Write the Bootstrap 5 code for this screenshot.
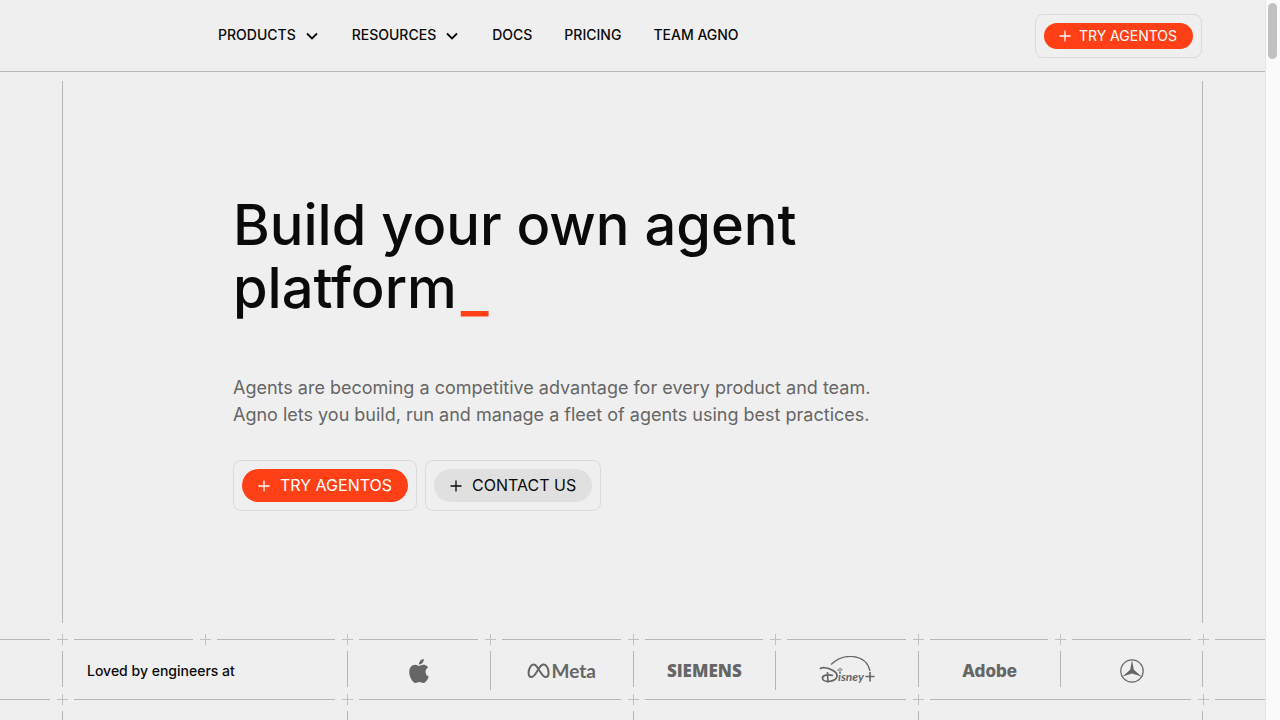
<!DOCTYPE html>
<html lang="en">
<head>
<meta charset="utf-8">
<meta name="viewport" content="width=device-width, initial-scale=1">
<title>Agno</title>
<link href="https://cdn.jsdelivr.net/npm/bootstrap@5.3.0/dist/css/bootstrap.min.css" rel="stylesheet">
<style>
:root { --rule: #b4b7b4; --ink: #0a0a0a; --brand: #ff4017; --logo: #666; }
body { background: #efefef; color: var(--ink); font-family: Inter, "Liberation Sans", sans-serif; font-size: 14px; line-height: 20px; }
.frame { width: calc(100% - 48px); max-width: 1141px; margin-inline: auto; }
.site-header { border-bottom: 1px solid var(--rule); }
.site-header .frame { min-height: 71px; }
.main-nav { gap: 32px; padding: 0 0 2px 156px; }
.main-nav a, .main-nav button { color: var(--ink); text-decoration: none; font-weight: 500; padding: 0; border: 0; background: none; }
.btn-shell { border: 1px solid #d9dbd9; border-radius: 8px; padding: 8px; }
.site-header .btn-shell { margin-right: 1px; }
.pill { border: 0; border-radius: 20px; display: flex; align-items: center; gap: 8px; padding: 3px 16px 3px 15px; font-size: 14px; line-height: 20px; }
.pill-lg { font-size: 16px; line-height: 25px; padding: 4px 16px; gap: 10px; }
.pill-brand { background: var(--brand); color: #fff; }
.pill-plain { background: #e0e0e0; color: var(--ink); }
.hero { border: solid var(--rule); border-width: 0 1px; margin-top: 9px; margin-bottom: 4px; min-height: 542px; padding: 113px 24px 32px 170px; }
.hero h1 { font-size: 56px; line-height: 63px; font-weight: 500; max-width: 640px; margin-bottom: 54px; }
.hero h1 span { display: inline-block; line-height: 56px; font-size: 60px; margin-left: 4px; vertical-align: -3px; color: var(--brand); }
.hero p { font-size: 18px; line-height: 27px; color: #666; margin-bottom: 32px; }
.seg { flex: 1 1 0; height: 1px; background: var(--rule); }
.cross-row { height: 24px; }
.cross-track { flex: 0 0 calc(min(100% - 48px, 1141px) + 24px); }
.cross { flex: none; width: 24px; height: 24px; stroke: #c0c2c0; }
.logo-grid { display: grid; grid-template-columns: repeat(8, 1fr); }
.logo-grid > div { border-left: 1px solid var(--rule); }
.logo-grid > div:last-child { border-right: 1px solid var(--rule); }
.logo-cell { min-height: 36px; display: flex; align-items: center; justify-content: center; padding-top: 4px; color: var(--logo); }
.logo-cell.tall { margin-bottom: -3px; padding-bottom: 3px; }
.logo-cell:last-child { margin-bottom: 0; padding-bottom: 0; }
.wide { grid-column: span 2; }
.logo-cell.intro { justify-content: start; padding: 3px 0 0 24px; color: var(--ink); font-weight: 500; }
.next-grid { min-height: 9px; }
.meta-name { font: 700 19px/24px Lato, sans-serif; }
.siemens-name { font: 800 17px/24px "Open Sans", "Noto Sans", sans-serif; }
.adobe-name { font: 800 17px/24px Inter, sans-serif; }
.disney-name { font-family: Lato, sans-serif; font-weight: 700; font-style: italic; }
.scroll-rail { flex: 0 0 15px; background: #fafafa; border-left: 1px solid #e6e6e6; padding: 3px 2px; }
.scroll-thumb { height: 56px; width: 9px; border-radius: 5px; background: #c1c1c1; }
</style>
</head>
<body>
<svg class="d-none" aria-hidden="true">
  <symbol id="cross" viewBox="0 0 24 24"><path d="M7 12.500H18M12.500 7V18" fill="none"/></symbol>
  <symbol id="plus" viewBox="0 0 12 12"><path d="M0.500 6H11.500M6 0.500V11.500" stroke="currentColor" stroke-width="1.300" fill="none"/></symbol>
  <symbol id="chev" viewBox="0 0 16 16"><path d="M3 6.500L8 11.500L13 6.500" stroke="currentColor" stroke-width="1.800" fill="none"/></symbol>
</svg>
<div class="d-flex min-vh-100">
  <div class="flex-fill d-flex flex-column">
    <header class="site-header">
      <div class="frame d-flex align-items-center justify-content-between">
        <nav class="main-nav d-flex align-items-center" aria-label="Main">
          <button type="button" class="d-flex align-items-center gap-2">PRODUCTS <svg width="16" height="16" aria-hidden="true"><use href="#chev"/></svg></button>
          <button type="button" class="d-flex align-items-center gap-2">RESOURCES <svg width="16" height="16" aria-hidden="true"><use href="#chev"/></svg></button>
          <a href="#">DOCS</a>
          <a href="#">PRICING</a>
          <a href="#">TEAM AGNO</a>
        </nav>
        <div class="btn-shell">
          <button type="button" class="pill pill-brand"><svg width="12" height="12" aria-hidden="true"><use href="#plus"/></svg>TRY AGENTOS</button>
        </div>
      </div>
    </header>
    <main>
      <section class="hero frame">
        <h1>Build your own agent platform<span>_</span></h1>
        <p>Agents are becoming a competitive advantage for every product and team.<br>Agno lets you build, run and manage a fleet of agents using best practices.</p>
        <div class="d-flex flex-wrap gap-2">
          <div class="btn-shell"><button type="button" class="pill pill-lg pill-brand"><svg width="12" height="12" aria-hidden="true"><use href="#plus"/></svg>TRY AGENTOS</button></div>
          <div class="btn-shell"><button type="button" class="pill pill-lg pill-plain"><svg width="12" height="12" aria-hidden="true"><use href="#plus"/></svg>CONTACT US</button></div>
        </div>
      </section>
      <section>
        <div class="cross-row d-flex align-items-center" aria-hidden="true">
          <i class="seg"></i>
          <div class="cross-track d-flex align-items-center">
            <svg class="cross"><use href="#cross"/></svg><i class="seg"></i><svg class="cross"><use href="#cross"/></svg><i class="seg"></i><svg class="cross"><use href="#cross"/></svg><i class="seg"></i><svg class="cross"><use href="#cross"/></svg><i class="seg"></i><svg class="cross"><use href="#cross"/></svg><i class="seg"></i><svg class="cross"><use href="#cross"/></svg><i class="seg"></i><svg class="cross"><use href="#cross"/></svg><i class="seg"></i><svg class="cross"><use href="#cross"/></svg><i class="seg"></i><svg class="cross"><use href="#cross"/></svg>
          </div>
          <i class="seg"></i>
        </div>
        <div class="frame logo-grid">
          <div class="logo-cell wide intro">Loved by engineers at</div>
          <div class="logo-cell">
            <svg width="24" height="24" viewBox="0 0 24 24" fill="currentColor" role="img" aria-label="Apple"><path d="M12.152 6.896c-.948 0-2.415-1.078-3.960-1.040-2.040.027-3.910 1.183-4.961 3.014-2.117 3.675-.546 9.103 1.519 12.090 1.013 1.454 2.208 3.090 3.792 3.039 1.520-.065 2.090-.987 3.935-.987 1.831 0 2.350.987 3.960.948 1.637-.026 2.676-1.480 3.676-2.948 1.156-1.688 1.636-3.325 1.662-3.415-.039-.013-3.182-1.221-3.220-4.857-.026-3.040 2.480-4.494 2.597-4.559-1.429-2.090-3.623-2.324-4.390-2.376-2-.156-3.675 1.090-4.610 1.090zM15.530 3.830c.843-1.012 1.400-2.427 1.245-3.830-1.207.052-2.662.805-3.532 1.818-.780.896-1.454 2.338-1.273 3.714 1.338.104 2.715-.688 3.559-1.701"/></svg>
          </div>
          <div class="logo-cell tall">
            <svg width="24" height="16" viewBox="0 0 24 16" fill="none" stroke="currentColor" stroke-width="2" aria-hidden="true"><path d="M11 5.500C9.500 3 8.300 1.600 6.600 1.600C3.800 1.600 1.600 5.800 1.600 10C1.600 12.600 2.700 14 4.500 14C6.600 14 7.900 12 9.700 9L12.200 4.900C13.500 2.800 14.800 1.600 16.600 1.600C19.700 1.600 21.600 5.800 21.600 10C21.600 12.600 20.500 14 18.700 14C16.700 14 15.500 12.400 13.700 9.500L11 5.500"/></svg><span class="meta-name">Meta</span>
          </div>
          <div class="logo-cell"><span class="siemens-name">SIEMENS</span></div>
          <div class="logo-cell tall">
            <svg width="56" height="31" viewBox="0 0 56 31" fill="none" stroke="currentColor" role="img" aria-label="Disney+">
              <path d="M12 8.500C25-4 47-2 51 15" stroke-width="1.200"/>
              <path d="M1 13C2 11 8 11.500 12 13.500C18 16 20 20 16 23.500C12 26.500 4 26 3.500 22.500C3 19 9 18 14 19.500" stroke-width="1.700"/>
              <path d="M8.500 16L9 26.500M46.500 20.500H55.500M51 16V25.500" stroke-width="1.600"/>
              <text class="disney-name" x="19" y="25" font-size="12" fill="currentColor" stroke="none">isney</text>
              <path d="M18.500 14.500C19.500 12 23.500 12 22.500 14C22 15.500 19.500 15.500 20 14" stroke-width="1"/>
            </svg>
          </div>
          <div class="logo-cell"><span class="adobe-name">Adobe</span></div>
          <div class="logo-cell tall">
            <svg width="24" height="24" viewBox="0 0 24 24" role="img" aria-label="Mercedes-Benz"><circle cx="12" cy="12" r="11.200" fill="none" stroke="currentColor" stroke-width="1.200"/><path d="M12 1L13.800 10.800L21.500 17.600L12 14.400L2.500 17.600L10.200 10.800Z" fill="currentColor"/></svg>
          </div>
        </div>
        <div class="cross-row d-flex align-items-center" aria-hidden="true">
          <i class="seg"></i>
          <div class="cross-track d-flex align-items-center">
            <svg class="cross"><use href="#cross"/></svg><i class="seg"></i><svg class="cross"><use href="#cross"/></svg><i class="seg"></i><svg class="cross"><use href="#cross"/></svg><i class="seg"></i><svg class="cross"><use href="#cross"/></svg><i class="seg"></i><svg class="cross"><use href="#cross"/></svg>
          </div>
          <i class="seg"></i>
        </div>
        <div class="frame logo-grid next-grid" aria-hidden="true">
          <div class="wide"></div><div class="wide"></div><div class="wide"></div><div class="wide"></div>
        </div>
      </section>
    </main>
  </div>
  <div class="scroll-rail" aria-hidden="true"><div class="scroll-thumb"></div></div>
</div>
<script src="https://cdn.jsdelivr.net/npm/bootstrap@5.3.0/dist/js/bootstrap.bundle.min.js"></script>
</body>
</html>
